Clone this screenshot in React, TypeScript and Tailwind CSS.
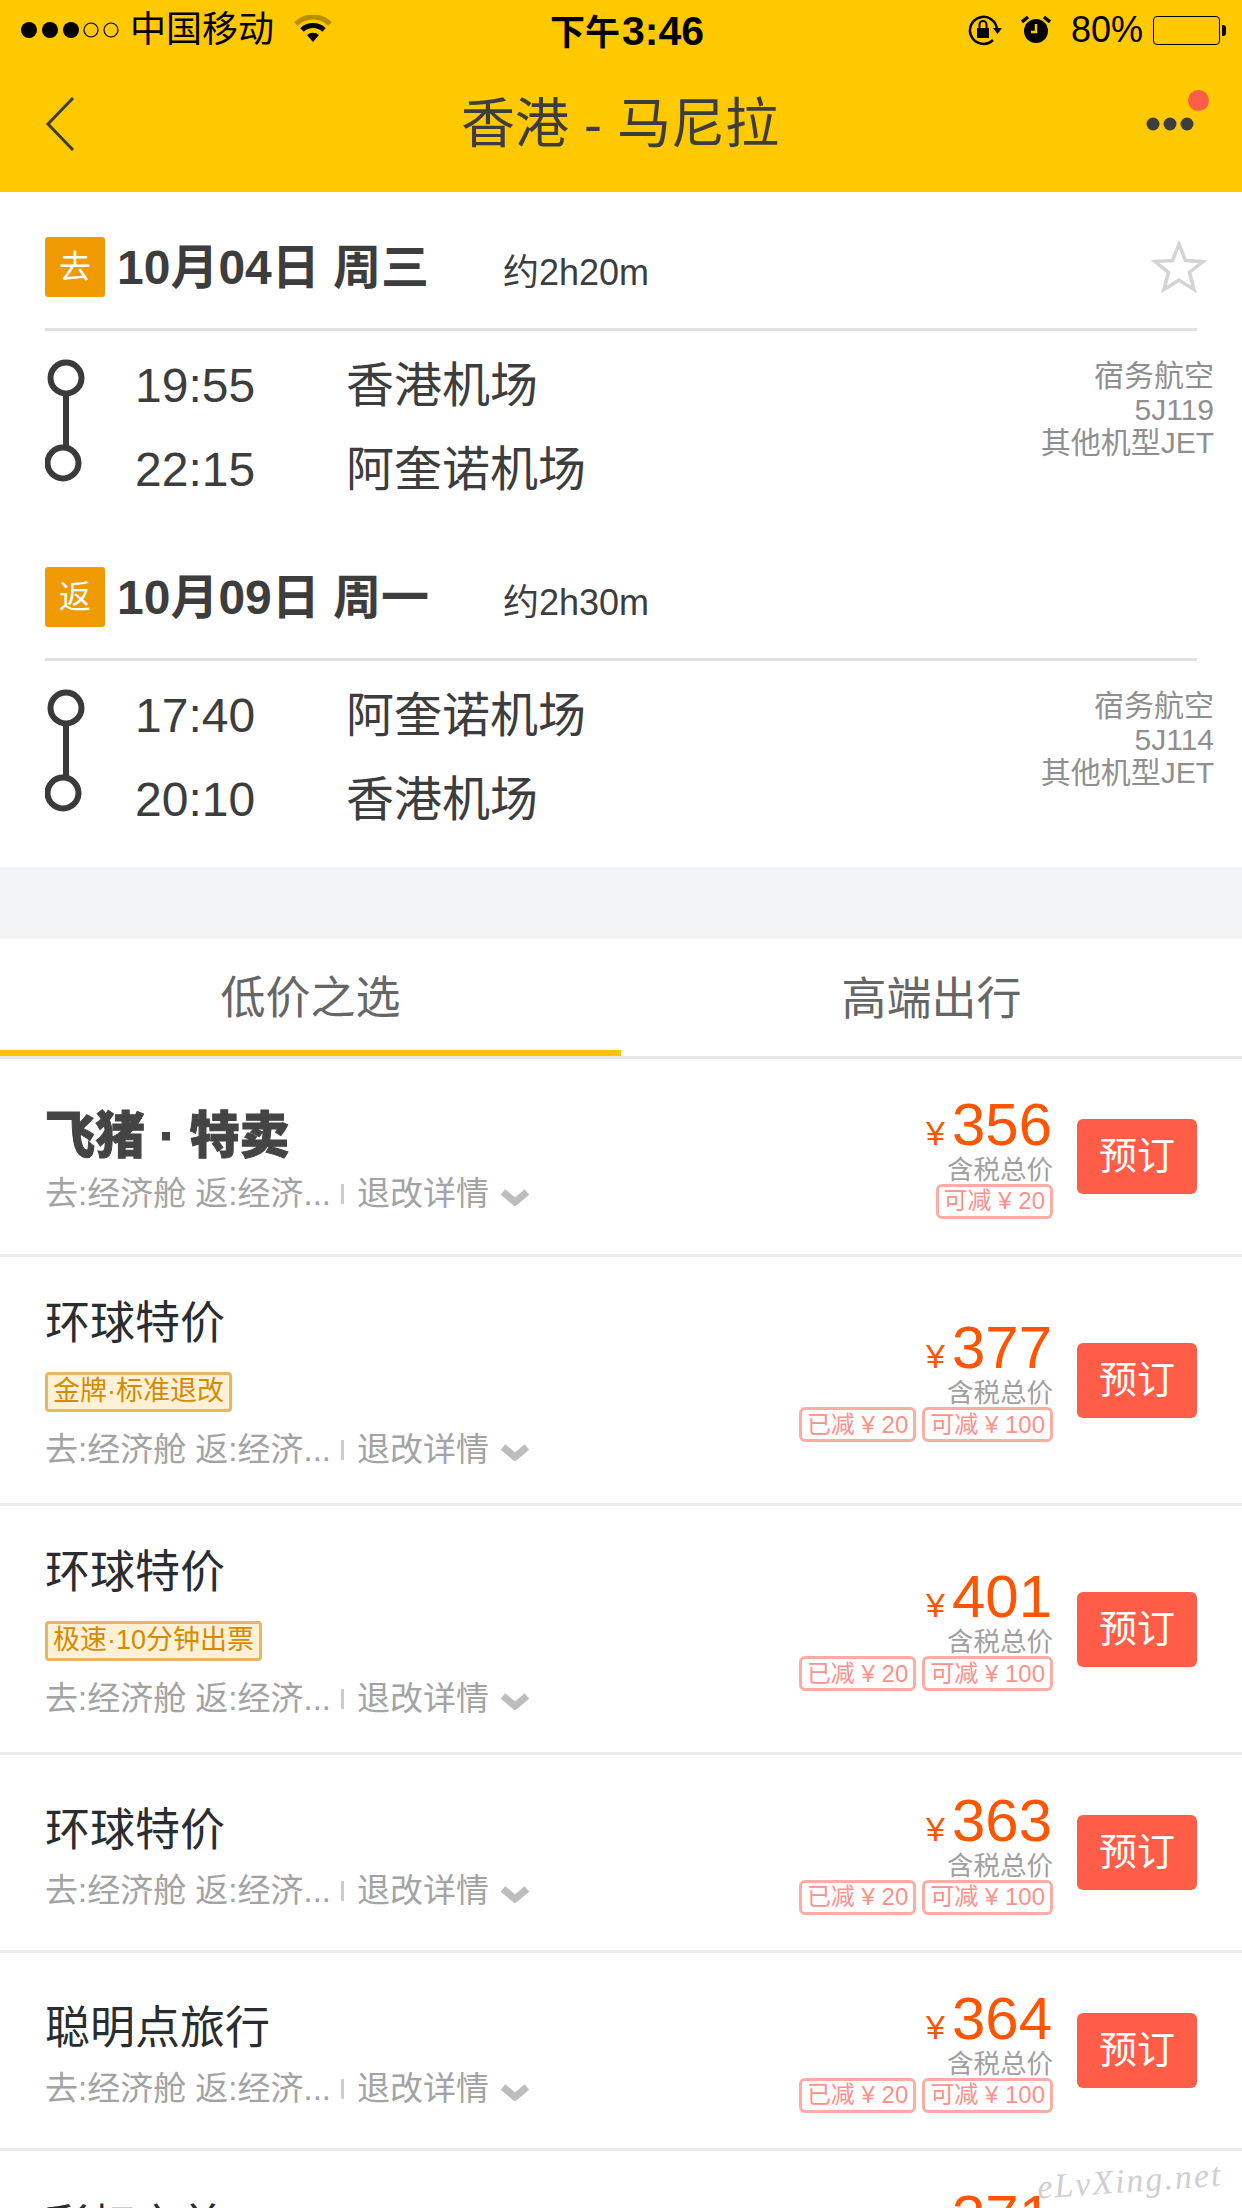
import React from "react";

const sans = { fontFamily: '"Liberation Sans","Noto Sans CJK SC",sans-serif' };

function Chevron() {
  return (
    <svg width="30" height="18" viewBox="0 0 30 18" className="ml-[11px] mt-[5px]">
      <path d="M3 4 L15 14 L27 4" fill="none" stroke="#bdbdbd" strokeWidth="7" />
    </svg>
  );
}

function Discount({ text }: { text: string }) {
  return (
    <div className="h-[35px] px-[5px] flex items-center rounded-[6px] border-[3px] border-[#ffaca5] text-[24px] leading-none text-[#ff908a] whitespace-nowrap">
      {text}
    </div>
  );
}

type Row = {
  h: number;
  title?: string;
  logo?: boolean;
  badge?: string;
  price: string;
  discounts: string[];
};

const rows: Row[] = [
  { h: 198, logo: true, price: "356", discounts: ["可减 ¥ 20"] },
  { h: 249, title: "环球特价", badge: "金牌·标准退改", price: "377", discounts: ["已减 ¥ 20", "可减 ¥ 100"] },
  { h: 249, title: "环球特价", badge: "极速·10分钟出票", price: "401", discounts: ["已减 ¥ 20", "可减 ¥ 100"] },
  { h: 198, title: "环球特价", price: "363", discounts: ["已减 ¥ 20", "可减 ¥ 100"] },
  { h: 198, title: "聪明点旅行", price: "364", discounts: ["已减 ¥ 20", "可减 ¥ 100"] },
  { h: 198, title: "彩虹之首", price: "371", discounts: ["已减 ¥ 20", "可减 ¥ 100"] },
];

function Fare({ row }: { row: Row }) {
  const pad = row.logo ? "pt-[19px]" : row.badge ? "pt-[13px]" : "pt-[17px]";
  return (
    <div
      className="flex items-center justify-between pl-[45px] pr-[45px] border-b-[3px] border-[#ebebeb]"
      style={{ height: row.h }}
    >
      <div className={"flex flex-col " + pad}>
        {row.logo ? (
          <div className="h-[56px] leading-[56px] text-[50px] font-black text-[#444] [-webkit-text-stroke:1px_#444] whitespace-nowrap">飞猪 · 特卖</div>
        ) : (
          <div className="h-[60px] leading-[60px] text-[45px] text-[#2a2d30]">{row.title}</div>
        )}
        {row.badge && (
          <div className="self-start mt-[18px] mb-[8px] h-[40px] px-[5px] flex items-center rounded-[4px] border-[3px] border-[#e6b860] bg-[#fff1d6] text-[#d68a00] text-[27px] leading-none whitespace-nowrap">
            {row.badge}
          </div>
        )}
        <div className="h-[60px] flex items-center text-[33px] text-[#a3a3a3] whitespace-nowrap">
          <span>去:经济舱 返:经济...</span>
          <span className="ml-[10px] mr-[13px] w-[3px] h-[20px] bg-[#cccccc]" />
          <span>退改详情</span>
          <Chevron />
        </div>
      </div>
      <div className="flex items-center gap-[24px]">
        <div className="flex flex-col items-end">
          <div className="flex items-baseline h-[63px] pr-[1px]">
            <span className="text-[34px] leading-none text-[#ff5500] mr-[7px]">¥</span>
            <span className="text-[60px] leading-[60px] text-[#ff5500]">{row.price}</span>
          </div>
          <div className="text-[26.5px] leading-[24px] h-[24px] text-[#a0a0a0]">含税总价</div>
          <div className="flex gap-[6px] mt-[2px]">
            {row.discounts.map((d) => (
              <Discount key={d} text={d} />
            ))}
          </div>
        </div>
        <div className="w-[120px] h-[75px] rounded-[6px] bg-[#ff5d47] text-white text-[38px] flex items-center justify-center">预订</div>
      </div>
    </div>
  );
}

function Timeline() {
  return (
    <svg width="40" height="127" viewBox="0 0 40 127" className="mt-[27px]">
      <circle cx="21" cy="20" r="15.500" fill="none" stroke="#3a3a3a" strokeWidth="6" />
      <rect x="18" y="34" width="6" height="55" fill="#3a3a3a" />
      <circle cx="18" cy="105" r="15.500" fill="none" stroke="#3a3a3a" strokeWidth="6" />
    </svg>
  );
}

function Flight({ tag, date, dur, t1, a1, t2, a2, no, star }: { tag: string; date: string; dur: string; t1: string; a1: string; t2: string; a2: string; no: string; star?: boolean }) {
  return (
    <div className="mb-[30px] last:mb-0">
      <div className="mx-[45px] h-[60px] flex items-center">
        <div className="w-[60px] h-[60px] rounded-[3px] bg-[#ef9a00] text-white text-[32px] flex items-center justify-center">{tag}</div>
        <div className="ml-[12px] text-[48px] font-bold text-[#3d3d3d] w-[386px] pt-[2px] whitespace-nowrap">{date}</div>
        <div className="text-[36px] text-[#3d3d3d] pt-[12px]">{dur}</div>
        {star && (
          <svg width="56" height="52" viewBox="0 0 56 52" className="ml-auto mr-[-10px]">
            <path d="M28 3 L34.500 19.500 L52 20.500 L38.500 31.500 L43 48.500 L28 39 L13 48.500 L17.500 31.500 L4 20.500 L21.500 19.500 Z" fill="none" stroke="#d4d4d4" strokeWidth="3.500" />
          </svg>
        )}
      </div>
      <div className="mx-[45px] mt-[31px] h-[3px] bg-[#e0e0e0]" />
      <div className="flex h-[206px] pl-[45px] pr-[28px]">
        <Timeline />
        <div className="ml-[50px] mt-[13px] text-[48px] text-[#3d3d3d] grid grid-cols-[211px_auto] auto-rows-[84px] items-center">
          <span>{t1}</span>
          <span>{a1}</span>
          <span>{t2}</span>
          <span>{a2}</span>
        </div>
        <div className="ml-auto mt-[28px] text-right text-[30px] leading-[33.500px] text-[#8f8f8f]">
          <div>宿务航空</div>
          <div>{no}</div>
          <div>其他机型JET</div>
        </div>
      </div>
    </div>
  );
}

function StatusBar() {
  return (
    <div className="h-[60px] relative flex items-center justify-between pl-[20px] pr-[16px] text-[36px] text-black">
      <div className="flex items-center">
        <svg width="100" height="20" viewBox="0 0 100 20">
          <circle cx="9" cy="10" r="8" fill="#000" />
          <circle cx="30" cy="10" r="8" fill="#000" />
          <circle cx="51" cy="10" r="8" fill="#000" />
          <circle cx="71" cy="10" r="7" fill="none" stroke="#000" strokeWidth="1.200" />
          <circle cx="91" cy="10" r="7" fill="none" stroke="#000" strokeWidth="1.200" />
        </svg>
        <span className="ml-[10px]">中国移动</span>
        <svg width="38" height="28" viewBox="0 0 38 28" className="ml-[20px] mb-[2px]">
          <path d="M2 9 A24 24 0 0 1 36 9" fill="none" stroke="#b98f00" strokeWidth="5" />
          <path d="M8 15 A16 16 0 0 1 30 15" fill="none" stroke="#000" strokeWidth="5" />
          <path d="M13 20 L19 27 L25 20 A9 9 0 0 0 13 20 Z" fill="#000" />
        </svg>
      </div>
      <div className="absolute left-[550px] top-[10px] font-bold leading-[42px] text-[35px] whitespace-nowrap">
        下午<span className="text-[41px] ml-[2px]">3:46</span>
      </div>
      <div className="flex items-center">
        <svg width="36" height="32" viewBox="0 0 36 32">
          <path d="M26 26 A13.500 13.500 0 1 1 30 16" fill="none" stroke="#000" strokeWidth="2.500" />
          <path d="M26 14 L35 14 L30.500 20 Z" fill="#000" />
          <rect x="10" y="14" width="12" height="10" fill="#000" />
          <path d="M12.500 14 V10.500 A3.500 3.500 0 0 1 19.500 10.500 V14" fill="none" stroke="#000" strokeWidth="2" />
        </svg>
        <svg width="30" height="30" viewBox="0 0 30 30" className="ml-[18px]">
          <circle cx="15" cy="16" r="12" fill="#000" />
          <path d="M15 9 V17 H10" fill="none" stroke="#ffc900" strokeWidth="2.500" />
          <path d="M1 7 L7 2 M29 7 L23 2" stroke="#000" strokeWidth="3.500" />
        </svg>
        <span className="ml-[20px] leading-none">80%</span>
        <div className="ml-[10px] w-[67px] h-[29px] rounded-[4px] border-[1.500px] border-black" />
        <div className="ml-[2px] w-[4px] h-[11px] rounded-r-[3px] bg-black" />
      </div>
    </div>
  );
}

export default function App() {
  return (
    <div className="w-[1242px] h-[2208px] overflow-hidden bg-white relative" style={sans}>
      <div className="bg-[#ffc900] h-[192px]">
        <StatusBar />
        <div className="h-[128px] flex items-center justify-between pl-[45px] pr-[47px] relative">
          <div className="w-[50px]">
            <svg width="30" height="56" viewBox="0 0 30 56" className="block">
              <path d="M28 2 L3 28 L28 54" fill="none" stroke="#3d3d3d" strokeWidth="3" />
            </svg>
          </div>
          <div className="text-[54px] text-[#3d3d3d] leading-none whitespace-nowrap">香港 - 马尼拉</div>
          <svg width="50" height="16" viewBox="0 0 50 16">
            <circle cx="8" cy="8" r="6.500" fill="#3d3d3d" />
            <circle cx="25" cy="8" r="6.500" fill="#3d3d3d" />
            <circle cx="42" cy="8" r="6.500" fill="#3d3d3d" />
          </svg>
          <div className="absolute right-[33px] top-[30px] w-[21px] h-[21px] rounded-full bg-[#ff5d47]" />
        </div>
      </div>

      <div className="pt-[45px] h-[675px]">
        <Flight tag="去" date="10月04日 周三" dur="约2h20m" t1="19:55" a1="香港机场" t2="22:15" a2="阿奎诺机场" no="5J119" star />
        <Flight tag="返" date="10月09日 周一" dur="约2h30m" t1="17:40" a1="阿奎诺机场" t2="20:10" a2="香港机场" no="5J114" />
      </div>

      <div className="h-[72px] bg-[#f2f3f5]" />

      <div className="h-[120px] flex border-b-[3px] border-[#e6e6e6] text-[45px] text-[#666666]">
        <div className="w-1/2 flex items-center justify-center border-b-[6px] border-[#ffc400] pt-[8px]">低价之选</div>
        <div className="w-1/2 flex items-center justify-center pt-[5px]">高端出行</div>
      </div>

      {rows.map((r, i) => (
        <Fare key={i} row={r} />
      ))}

      <div
        className="absolute left-[1037px] top-[2155px] text-[34px] italic text-[#cfcfcf] whitespace-nowrap rotate-[-4deg] tracking-[2px]"
        style={{ fontFamily: '"Liberation Serif",serif' }}
      >
        eLvXing.net
      </div>
    </div>
  );
}
